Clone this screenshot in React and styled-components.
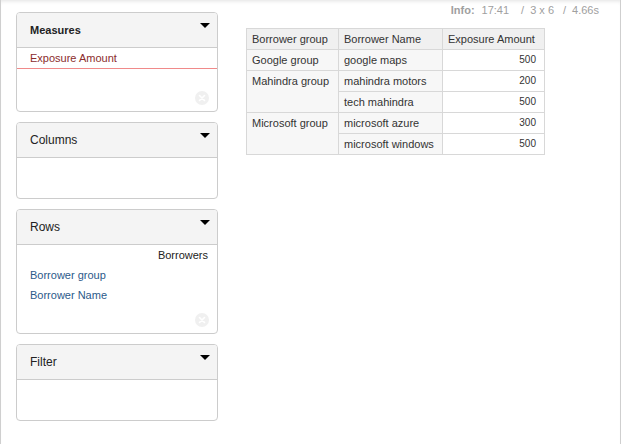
import React from "react";
import styled, { createGlobalStyle } from "styled-components";

const Global = createGlobalStyle`
  html, body { margin: 0; padding: 0; background: #fff; }
  body { font-family: "Liberation Sans", Arial, sans-serif; font-size: 11px; color: #333; }
`;

const Frame = styled.div`
  width: 621px;
  height: 444px;
  border-left: 1px solid #cfcfcf;
  border-right: 1px solid #cfcfcf;
  box-shadow: inset 0 4px 4px -3px rgba(0,0,0,0.12);
  display: flex;
  align-items: flex-start;
  gap: 28px;
  padding: 12px 0 0 15px;
  box-sizing: border-box;
  position: relative;
`;

const Sidebar = styled.div`
  width: 202px;
  flex: none;
  display: flex;
  flex-direction: column;
  gap: 10px;
`;

const Panel = styled.div`
  border: 1px solid #cccccc;
  border-radius: 4px;
  background: #fff;
  position: relative;
  overflow: hidden;
`;

const PanelHeader = styled.div`
  height: 34px;
  background: #f4f4f4;
  border-bottom: 1px solid #cccccc;
  display: flex;
  align-items: center;
  padding-left: 13px;
  position: relative;
  font-size: ${p => (p.$bold ? "11px" : "12px")};
  font-weight: ${p => (p.$bold ? "bold" : "normal")};
  color: #222;
`;

const Caret = styled.span`
  position: absolute;
  right: 7px;
  top: 10px;
  width: 0;
  height: 0;
  border-left: 5px solid transparent;
  border-right: 5px solid transparent;
  border-top: 5px solid #000;
`;

const PanelBody = styled.div`
  height: ${p => p.$h}px;
  position: relative;
`;

const MeasureItem = styled.div`
  height: 20px;
  line-height: 20px;
  padding-left: 13px;
  color: #8b2c2c;
  border-bottom: 1px solid #f08a8a;
`;

const GroupLabel = styled.div`
  height: 20px;
  line-height: 20px;
  text-align: right;
  padding-right: 9px;
  color: #222;
`;

const RowItem = styled.div`
  height: 20px;
  line-height: 20px;
  padding-left: 13px;
  color: #2b5a8a;
`;

const ClearBtn = styled.span`
  position: absolute;
  right: 8px;
  bottom: 6px;
  width: 14px;
  height: 14px;
  border-radius: 50%;
  background: #f0f0f0;
  display: flex;
  align-items: center;
  justify-content: center;
`;

const Main = styled.div`
  display: flex;
  flex-direction: column;
  align-items: flex-start;
`;

const Table = styled.table`
  border-collapse: collapse;
  table-layout: fixed;
  width: 298px;
  margin-top: 16px;
  font-size: 11px;
  color: #333;
`;

const Th = styled.th`
  font-weight: normal;
  text-align: left;
  background: #f0f0f0;
  border: 1px solid #d8d8d8;
  height: 20px;
  padding: 0 5px;
  line-height: 18px;
  white-space: nowrap;
`;

const Td = styled.td`
  border: 1px solid #d8d8d8;
  height: 20px;
  padding: ${p => (p.$num ? "0 8px 0 5px" : "0 5px")};
  background: ${p => (p.$num ? "#fff" : "#f7f7f7")};
  text-align: ${p => (p.$num ? "right" : "left")};
  vertical-align: ${p => (p.$top ? "top" : "middle")};
  font-size: ${p => (p.$num ? "10px" : "11px")};
  line-height: 20px;
  white-space: nowrap;
`;

const Info = styled.div`
  position: absolute;
  top: 4px;
  right: 21px;
  color: #a0a0a0;
  font-size: 11px;
  white-space: pre;
  display: flex;
`;

const InfoPart = styled.span`
  margin-left: ${p => p.$ml || 0}px;
  font-weight: ${p => (p.$bold ? "bold" : "normal")};
`;

function XCircle() {
  return (
    <ClearBtn>
      <svg width="8" height="8" viewBox="0 0 8 8">
        <path d="M1.5 1.5 L6.5 6.5 M6.5 1.5 L1.5 6.5" stroke="#fff" strokeWidth="1.6" strokeLinecap="round" />
      </svg>
    </ClearBtn>
  );
}

const rows = [
  { g: "Google group", span: 1, n: "google maps", v: 500 },
  { g: "Mahindra group", span: 2, n: "mahindra motors", v: 200 },
  { n: "tech mahindra", v: 500 },
  { g: "Microsoft group", span: 2, n: "microsoft azure", v: 300 },
  { n: "microsoft windows", v: 500 },
];

export default function App() {
  return (
    <>
      <Global />
      <Frame>
        <Info>
          <InfoPart $bold>Info:</InfoPart>
          <InfoPart $ml={7}>17:41</InfoPart>
          <InfoPart $ml={12}>/</InfoPart>
          <InfoPart $ml={6}>3 x 6</InfoPart>
          <InfoPart $ml={9}>/</InfoPart>
          <InfoPart $ml={6}>4.66s</InfoPart>
        </Info>
        <Sidebar>
          <Panel>
            <PanelHeader $bold>Measures<Caret /></PanelHeader>
            <PanelBody $h={63}>
              <MeasureItem>Exposure Amount</MeasureItem>
              <XCircle />
            </PanelBody>
          </Panel>
          <Panel>
            <PanelHeader>Columns<Caret /></PanelHeader>
            <PanelBody $h={40} />
          </Panel>
          <Panel>
            <PanelHeader>Rows<Caret /></PanelHeader>
            <PanelBody $h={88}>
              <GroupLabel>Borrowers</GroupLabel>
              <RowItem>Borrower group</RowItem>
              <RowItem>Borrower Name</RowItem>
              <XCircle />
            </PanelBody>
          </Panel>
          <Panel>
            <PanelHeader>Filter<Caret /></PanelHeader>
            <PanelBody $h={40} />
          </Panel>
        </Sidebar>
        <Main>
          <Table>
            <colgroup>
              <col style={{ width: 92 }} />
              <col style={{ width: 104 }} />
              <col style={{ width: 102 }} />
            </colgroup>
            <thead>
              <tr>
                <Th>Borrower group</Th>
                <Th>Borrower Name</Th>
                <Th>Exposure Amount</Th>
              </tr>
            </thead>
            <tbody>
              {rows.map((r, i) => (
                <tr key={i}>
                  {r.g && <Td rowSpan={r.span} $top>{r.g}</Td>}
                  <Td>{r.n}</Td>
                  <Td $num>{r.v}</Td>
                </tr>
              ))}
            </tbody>
          </Table>
        </Main>
      </Frame>
    </>
  );
}
